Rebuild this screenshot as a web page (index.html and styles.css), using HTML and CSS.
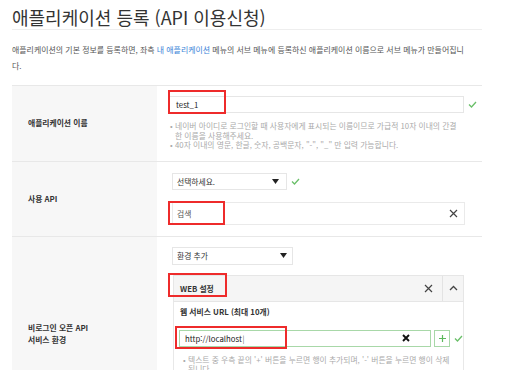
FILE: index.html
```html
<!DOCTYPE html>
<html lang="ko">
<head>
<meta charset="utf-8">
<title>애플리케이션 등록</title>
<link rel="stylesheet" href="styles.css">
</head>
<body>
<div class="page">
  <h1 class="title">애플리케이션 등록 (API 이용신청)</h1>
  <p class="desc">애플리케이션의 기본 정보를 등록하면, 좌측 <a class="link">내 애플리케이션</a> 메뉴의 서브 메뉴에 등록하신 애플리케이션 이름으로 서브 메뉴가 만들어집니<br>다.</p>

  <div class="form">
    <div class="row r1">
      <div class="label">애플리케이션 이름</div>
      <div class="field">
        <div class="inline">
          <div class="input name-input">test_1<span class="mark m1"></span></div>
          <svg class="check" width="9" height="7" viewBox="0 0 9 7"><path d="M1 3.5l2.5 2.5L8 1" fill="none" stroke="#6abf69" stroke-width="1.3"/></svg>
        </div>
        <ul class="help">
          <li>네이버 아이디로 로그인할 때 사용자에게 표시되는 이름이므로 가급적 10자 이내의 간결<br>한 이름을 사용해주세요.</li>
          <li>40자 이내의 영문, 한글, 숫자, 공백문자, "-", "_" 만 입력 가능합니다.</li>
        </ul>
      </div>
    </div>

    <div class="row r2">
      <div class="label">사용 API</div>
      <div class="field">
        <div class="inline">
          <div class="select sel-api">선택하세요.<svg width="7" height="5" viewBox="0 0 7 5"><path d="M0 0h7L3.5 5z" fill="#222"/></svg></div>
          <svg class="check" width="9" height="7" viewBox="0 0 9 7"><path d="M1 3.5l2.5 2.5L8 1" fill="none" stroke="#6abf69" stroke-width="1.3"/></svg>
        </div>
        <div class="api-item">검색<svg width="9" height="9" viewBox="0 0 9 9"><path d="M1 1l7 7M8 1L1 8" stroke="#444" stroke-width="1.2"/></svg><span class="mark m2"></span></div>
      </div>
    </div>

    <div class="row r3">
      <div class="label">비로그인 오픈 API<br>서비스 환경</div>
      <div class="field">
        <div class="select sel-env">환경 추가<svg width="7" height="5" viewBox="0 0 7 5"><path d="M0 0h7L3.5 5z" fill="#222"/></svg></div>
        <div class="panel">
          <div class="panel-head">
            <span class="panel-title">WEB 설정</span>
            <span class="head-btn close"><svg width="9" height="9" viewBox="0 0 9 9"><path d="M1 1l7 7M8 1L1 8" stroke="#444" stroke-width="1.2"/></svg></span>
            <span class="head-btn fold"><svg width="9" height="6" viewBox="0 0 9 6"><path d="M1 5l3.5-3.5L8 5" fill="none" stroke="#444" stroke-width="1.3"/></svg></span>
            <span class="mark m3"></span>
          </div>
          <div class="panel-body">
            <div class="sub-title">웹 서비스 URL (최대 10개)</div>
            <div class="inline url-row">
              <div class="url-input">http://localhost<span class="caret">|</span><svg class="url-clear" width="8" height="8" viewBox="0 0 8 8"><path d="M1 1l6 6M7 1L1 7" stroke="#111" stroke-width="1.9"/></svg><span class="mark m4"></span></div>
              <span class="plus"><svg width="7" height="7" viewBox="0 0 7 7"><path d="M3.5 0v7M0 3.5h7" stroke="#5cb85c" stroke-width="1.2"/></svg></span>
              <svg class="check" width="9" height="7" viewBox="0 0 9 7"><path d="M1 3.5l2.5 2.5L8 1" fill="none" stroke="#6abf69" stroke-width="1.3"/></svg>
            </div>
            <ul class="help help-url">
              <li>텍스트 중 우측 끝의 '+' 버튼을 누르면 행이 추가되며, '-' 버튼을 누르면 행이 삭제<br>됩니다.</li>
            </ul>
          </div>
        </div>
      </div>
    </div>
  </div>
</div>
</body>
</html>
```

FILE: styles.css
```css
html, body {
  margin: 0;
  padding: 0;
  overflow: hidden;
  background: #fff;
}

body {
  font-family: "Noto Sans CJK KR", "Noto Sans", sans-serif;
  color: #333;
}

.page {
  width: 470px;
  padding-left: 12px;
}

.title {
  margin: 0;
  padding-top: 5px;
  font-size: 18px;
  line-height: 24px;
  font-weight: 400;
  color: #333;
  border-bottom: 1px solid #eee;
}

.desc {
  margin: 12px 0 0;
  width: 480px;
  font-size: 7.95px;
  line-height: 16px;
  color: #555;
}

.link {
  color: #3a84d8;
}

.form {
  margin-top: 11px;
  border-top: 1px solid #e8e8e8;
}

.row {
  display: grid;
  grid-template-columns: 145px 325px;
  border-bottom: 1px solid #e8e8e8;
}

.label {
  background: #f7f7f7;
  padding-left: 16px;
  display: flex;
  align-items: center;
  font-size: 7.8px;
  line-height: 12px;
  font-weight: 700;
  color: #333;
}

.field {
  padding: 10px 0 11px 11px;
}

.r2 .field {
  padding-top: 11px;
}

.r3 .field {
  min-height: 194px;
  box-sizing: border-box;
}

.inline {
  display: flex;
  align-items: center;
  gap: 4px;
}

.input {
  position: relative;
  box-sizing: border-box;
  width: 296px;
  height: 17px;
  border: 1px solid #e6e6e6;
  padding: 0 7px;
  display: flex;
  align-items: center;
  font-size: 7.8px;
  color: #222;
}

.help {
  list-style: none;
  margin: 8px 0 0;
  padding: 0;
  width: 300px;
  font-size: 7.8px;
  line-height: 9.5px;
  color: #aaa;
}

.help li {
  position: relative;
  padding-left: 7px;
  white-space: nowrap;
}

.help li::before {
  content: "•";
  position: absolute;
  left: 2px;
  top: 0;
}

.select {
  box-sizing: border-box;
  height: 17px;
  margin-left: 4px;
  border: 1px solid #e6e6e6;
  padding: 0 7px 0 4px;
  display: flex;
  align-items: center;
  justify-content: space-between;
  font-size: 7.8px;
  color: #333;
}

.sel-api {
  width: 115px;
}

.sel-env {
  width: 121px;
  height: 18px;
  padding-right: 5px;
}

.api-item {
  position: relative;
  box-sizing: border-box;
  width: 293px;
  height: 23px;
  margin: 12px 0 0 4px;
  border: 1px solid #eaeaea;
  padding: 0 6px 0 4px;
  display: flex;
  align-items: center;
  justify-content: space-between;
  font-size: 7.8px;
  color: #555;
}

.panel {
  width: 291px;
  margin: 10px 0 0 5px;
}

.panel-head {
  position: relative;
  box-sizing: border-box;
  height: 27px;
  background: #f5f5f5;
  border: 1px solid #e6e6e6;
  display: flex;
  align-items: center;
}

.panel-title {
  flex: 1;
  padding-left: 6px;
  font-size: 7.8px;
  font-weight: 700;
  color: #333;
}

.head-btn {
  height: 100%;
  display: flex;
  align-items: center;
  justify-content: center;
}

.close {
  width: 28px;
}

.fold {
  width: 20px;
  border-left: 1px solid #e3e3e3;
}

.panel-body {
  border-left: 1px solid #e8e8e8;
  border-right: 1px solid #e8e8e8;
  padding: 5px 0 14px 5px;
}

.sub-title {
  margin-left: 1px;
  font-size: 7.8px;
  line-height: 10px;
  font-weight: 700;
  color: #333;
}

.url-row {
  margin-top: 13px;
  gap: 3px;
}

.url-input {
  position: relative;
  box-sizing: border-box;
  width: 253px;
  height: 17px;
  border: 1px solid #a8d8a8;
  padding: 0 20px 0 5px;
  display: flex;
  align-items: center;
  font-size: 7.8px;
  color: #222;
}

.caret {
  font-weight: 300;
  margin-left: 0.5px;
}

.url-clear {
  margin-left: auto;
}

.plus {
  box-sizing: border-box;
  width: 16px;
  height: 17px;
  border: 1px solid #a8d8a8;
  display: flex;
  align-items: center;
  justify-content: center;
}

.url-row .check {
  margin-left: 1px;
}

.help-url {
  width: 280px;
  margin-top: 8px;
}

.help-url li {
  padding-left: 9px;
}

.help-url li::before {
  left: 4px;
}

.mark {
  position: absolute;
  box-sizing: border-box;
  border: 2px solid #ee2b2b;
}

.m1 {
  left: -1px;
  top: -7px;
  width: 58px;
  height: 24px;
}

.m2 {
  left: -5px;
  top: -2px;
  width: 57px;
  height: 24px;
}

.m3 {
  left: -6px;
  top: -3px;
  width: 59px;
  height: 24px;
}

.m4 {
  left: -5px;
  top: -5px;
  width: 112px;
  height: 23px;
}
```
